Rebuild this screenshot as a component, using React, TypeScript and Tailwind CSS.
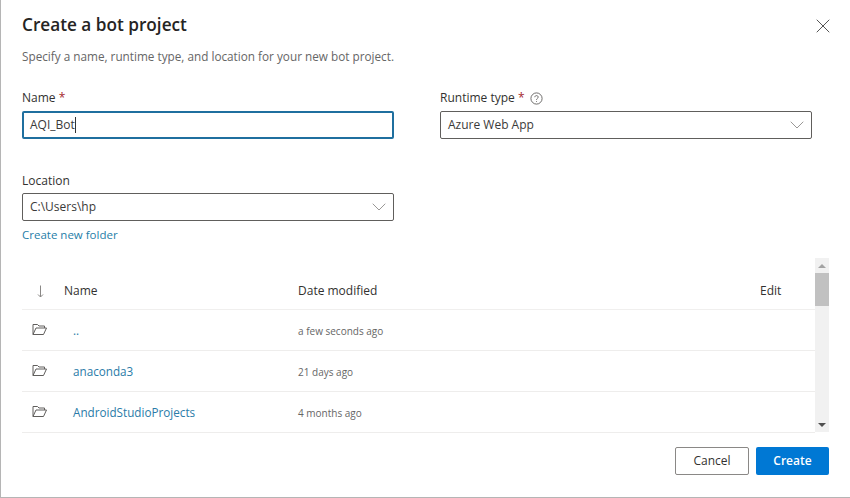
import { ChevronDown, X } from "lucide-react";

const rows = [
  { name: "..", modified: "a few seconds ago" },
  { name: "anaconda3", modified: "21 days ago" },
  { name: "AndroidStudioProjects", modified: "4 months ago" },
];

function FolderOpen() {
  return (
    <svg width="16" height="13" viewBox="0 0 16 13" fill="none" stroke="#605e5c" strokeWidth="1">
      <path d="M1 11.5V1.5h4.5l1.5 1.5h5.5v2" />
      <path d="M1 11.5h10.5l3-6.5H4l-3 6.5z" />
    </svg>
  );
}

function SelectBox({ value }: { value: string }) {
  return (
    <div className="flex h-[28px] w-[372px] items-center justify-between rounded-[2px] border border-[#605e5c] pl-[7px] pr-[2px] text-[12px] text-[#3b3a39]">
      <span>{value}</span>
      <ChevronDown className="h-[24px] w-[24px] text-[#9a9896]" strokeWidth={1} />
    </div>
  );
}

export default function App() {
  return (
    <div className="flex h-[498px] w-[850px] flex-col overflow-hidden border-b border-l border-[#b5b5b5] bg-white pl-[21px] font-['Open_Sans',sans-serif] text-[#323130]">
      <div className="flex h-[50px] items-end justify-between pr-[15px]">
        <h1 className="text-[17.2px] font-semibold leading-[50px] text-[#252423]">Create a bot project</h1>
        <X className="mb-[12px] h-[24px] w-[24px] text-[#555]" strokeWidth={1} />
      </div>
      <p className="text-[11.75px] leading-[12px] text-[#666]">
        Specify a name, runtime type, and location for your new bot project.
      </p>

      <div className="mt-[24px] flex gap-[46px]">
        <div>
          <div className="h-[25px] text-[12px] font-medium leading-[24px]">
            Name <span className="text-[#a4262c]">*</span>
          </div>
          <div className="flex h-[28px] w-[372px] items-center rounded-[2px] border-2 border-[#1f6f9f] pl-[6px] text-[12px] text-[#3b3a39]">
            AQI_Bot
            <span className="h-[16px] w-px bg-[#333]" />
          </div>
        </div>
        <div>
          <div className="flex h-[25px] items-center gap-[5px] pb-[1px] text-[12px] font-medium">
            <span>
              Runtime type <span className="text-[#a4262c]">*</span>
            </span>
            <svg width="13" height="13" viewBox="0 0 13 13" fill="none" stroke="#605e5c" strokeWidth="0.9">
              <circle cx="6.5" cy="6.5" r="5.6" />
              <path d="M4.8 5.2c0-1 .8-1.6 1.7-1.6s1.7.6 1.7 1.5c0 1.3-1.7 1.4-1.7 2.7" />
              <path d="M6.5 9.2v.8" />
            </svg>
          </div>
          <SelectBox value="Azure Web App" />
        </div>
      </div>

      <div className="mt-[30px] h-[24px] text-[12px] font-medium leading-[23px]">Location</div>
      <SelectBox value="C:\Users\hp" />
      <a className="mt-[6px] text-[11.5px] leading-[16px] text-[#1f7ea8]">Create new folder</a>

      <div className="mt-[15px] flex h-[174px] w-[807px]">
        <div className="flex-1">
          <div className="flex h-[52px] items-end border-b border-[#f0efee] pb-[9px] text-[12px] font-medium">
            <div className="flex w-[42px] justify-center pb-[2px] pr-[5px]">
              <svg width="7" height="13" viewBox="0 0 7 13" fill="none" stroke="#8a8886" strokeWidth="1">
                <path d="M3.5 0.5v11.5" />
                <path d="M1 9.5l2.5 2.5 2.5-2.5" />
              </svg>
            </div>
            <div className="w-[234px]">Name</div>
            <div className="flex-1">Date modified</div>
            <div className="w-[55px]">Edit</div>
          </div>
          {rows.map((row) => (
            <div key={row.name} className="flex h-[41px] items-center border-b border-[#eeedec] pt-[2px]">
              <div className="flex w-[36px] justify-center pb-[3px]">
                <FolderOpen />
              </div>
              <a className="w-[240px] pl-[15px] text-[11.7px] text-[#2a7ba8]">{row.name}</a>
              <span className="text-[10px] text-[#666]">{row.modified}</span>
            </div>
          ))}
        </div>
        <div className="flex w-[14px] flex-col items-center bg-[#f1f1f1]">
          <div className="flex h-[15px] items-center">
            <div className="h-0 w-0 border-x-[4px] border-b-[4px] border-x-transparent border-b-[#a3a3a3]" />
          </div>
          <div className="h-[33px] w-full bg-[#c1c1c1]" />
          <div className="flex-1" />
          <div className="flex h-[15px] items-center">
            <div className="h-0 w-0 border-x-[4px] border-t-[4px] border-x-transparent border-t-[#505050]" />
          </div>
        </div>
      </div>

      <div className="mt-[15px] flex w-[807px] justify-end gap-[7px]">
        <button className="h-[28px] w-[74px] rounded-[2px] border border-[#8a8886] bg-white text-[12px] font-medium text-[#323130]">
          Cancel
        </button>
        <button className="h-[28px] w-[73px] rounded-[2px] bg-[#0078d4] text-[12px] font-semibold text-white">
          Create
        </button>
      </div>
    </div>
  );
}
